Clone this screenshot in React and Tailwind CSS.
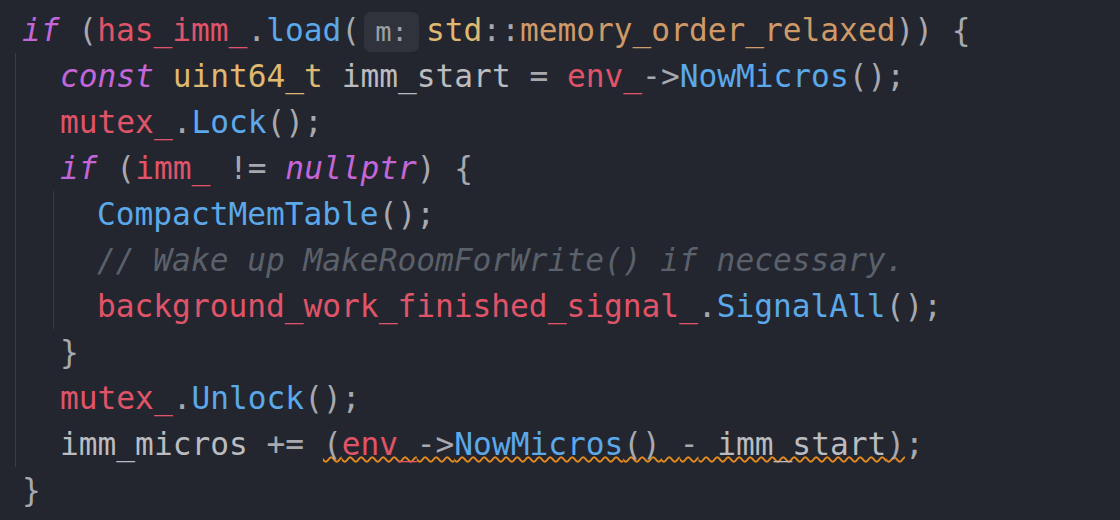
import React from "react";

const K = ({ children }) => <span className="italic text-[#c466d9]">{children}</span>;
const R = ({ children }) => <span className="text-[#e0546a]">{children}</span>;
const B = ({ children }) => <span className="text-[#5ba8ea]">{children}</span>;
const Y = ({ children }) => <span className="text-[#dfb872]">{children}</span>;
const O = ({ children }) => <span className="text-[#cf9a67]">{children}</span>;
const P = ({ children }) => <span className="text-[#a7a9ae]">{children}</span>;

function Line({ children, className = "" }) {
  return <div className={`h-[46px] leading-[46px] whitespace-pre ${className}`}>{children}</div>;
}

function Hint({ label }) {
  return (
    <span className="ml-[4px] mr-[7px] inline-block h-[40px] w-[55px] rounded-[7px] bg-[#30333b] text-center text-[27px] leading-[40px] text-[#9da0a6]">
      {label}
    </span>
  );
}

export default function App() {
  return (
    <div
      className="w-[1120px] h-[520px] overflow-hidden bg-[#23262e] pt-[7px] pl-[15px] text-[31.2px] text-[#bbbcc0]"
      style={{ fontFamily: '"DejaVu Sans Mono", "Liberation Mono", monospace' }}
    >
      <Line className="pl-[7px]">
        <K>if</K>{" "}<P>(</P>
        <R>has_imm_</R>
        <P>.</P>
        <B>load</B>
        <P>(</P>
        <Hint label="m:" />
        <Y>std</Y>
        <P>::</P>
        <O>memory_order_relaxed</O>
        <P>))</P>{" "}<P>{"{"}</P>
      </Line>

      <div className="border-l border-[#393c44] pl-[44px]">
        <Line>
          <K>const</K>{" "}<Y>uint64_t</Y>{" imm_start "}<P>=</P>{" "}<R>env_</R>
          <P>-&gt;</P>
          <B>NowMicros</B>
          <P>();</P>
        </Line>
        <Line>
          <R>mutex_</R>
          <P>.</P>
          <B>Lock</B>
          <P>();</P>
        </Line>
        <Line>
          <K>if</K>{" "}<P>(</P>
          <R>imm_</R>{" "}<P>!=</P>{" "}<K>nullptr</K>
          <P>)</P>{" "}<P>{"{"}</P>
        </Line>

        <div className="-ml-[7px] border-l border-[#393c44] pl-[43px]">
          <Line>
            <B>CompactMemTable</B>
            <P>();</P>
          </Line>
          <Line>
            <span className="italic text-[#5b616b]">// Wake up MakeRoomForWrite() if necessary.</span>
          </Line>
          <Line>
            <R>background_work_finished_signal_</R>
            <P>.</P>
            <B>SignalAll</B>
            <P>();</P>
          </Line>
        </div>

        <Line>
          <P>{"}"}</P>
        </Line>
        <Line>
          <R>mutex_</R>
          <P>.</P>
          <B>Unlock</B>
          <P>();</P>
        </Line>
        <Line>
          {"imm_micros "}<P>+=</P>{" "}
          <span className="underline decoration-wavy decoration-[#e58a1f] decoration-[1.5px] underline-offset-[1px] [text-decoration-skip-ink:none]">
            <P>(</P>
            <R>env_</R>
            <P>-&gt;</P>
            <B>NowMicros</B>
            <P>()</P>{" "}<P>-</P>{" imm_start"}<P>)</P>
          </span>
          <P>;</P>
        </Line>
      </div>

      <Line className="pl-[7px]">
        <P>{"}"}</P>
      </Line>
    </div>
  );
}
